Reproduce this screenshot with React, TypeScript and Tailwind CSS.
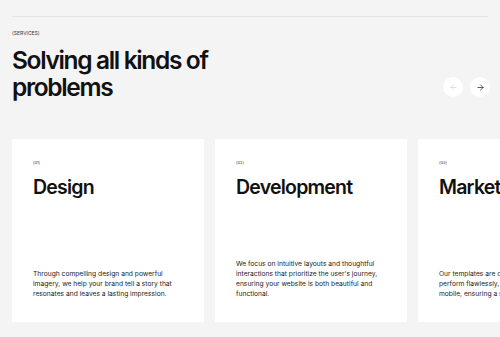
import React from 'react';
import { ArrowLeft, ArrowRight } from 'lucide-react';

const services = [
    {
        num: '(01)',
        title: 'Design',
        text: 'Through compelling design and powerful imagery, we help your brand tell a story that resonates and leaves a lasting impression.',
    },
    {
        num: '(02)',
        title: 'Development',
        text: "We focus on intuitive layouts and thoughtful interactions that prioritize the user's journey, ensuring your website is both beautiful and functional.",
    },
    {
        num: '(03)',
        title: 'Marketing',
        text: 'Our templates are designed with care to perform flawlessly, whether on a desktop or mobile, ensuring a seamless experience.',
    },
];

const App: React.FC = () => {
    return (
        <div
            className="w-[500px] h-[337px] overflow-hidden bg-[#f4f4f4] text-[#111]"
            style={{ fontFamily: 'Inter, "Noto Sans", sans-serif' }}
        >
            <div className="px-3 pt-4">
                <div className="h-px bg-[#e4e4e4]" />
                <p className="mt-[14px] text-[5px] uppercase leading-none text-[#333]">(Services)</p>
                <div className="flex items-end justify-between">
                    <h2 className="mt-[11px] w-[220px] text-[24.5px] font-semibold leading-[27px] tracking-[-0.055em]">
                        Solving all kinds of problems
                    </h2>
                    <div className="flex gap-[7px] mb-[4px] mr-[-2px]">
                        <button className="w-5 h-5 rounded-full bg-white flex items-center justify-center text-[#ccc]">
                            <ArrowLeft size={9} strokeWidth={1.5} />
                        </button>
                        <button className="w-5 h-5 rounded-full bg-white flex items-center justify-center text-[#111]">
                            <ArrowRight size={9} strokeWidth={1.75} />
                        </button>
                    </div>
                </div>
            </div>

            <div className="mt-[38px] flex gap-[11px] pl-3">
                {services.map((s) => (
                    <div key={s.num} className="w-[192px] h-[183px] shrink-0 bg-white px-[21px] pt-[22px] pb-[23px] flex flex-col">
                        <span className="text-[4px] leading-none text-[#333]">{s.num}</span>
                        <h3 className="mt-[10px] text-[19.5px] font-semibold leading-[24px] tracking-[-0.04em] whitespace-nowrap">
                            {s.title}
                        </h3>
                        <p className="mt-auto text-[6.7px] leading-[10px] text-[#222]">{s.text}</p>
                    </div>
                ))}
            </div>
        </div>
    );
};

export default App;
